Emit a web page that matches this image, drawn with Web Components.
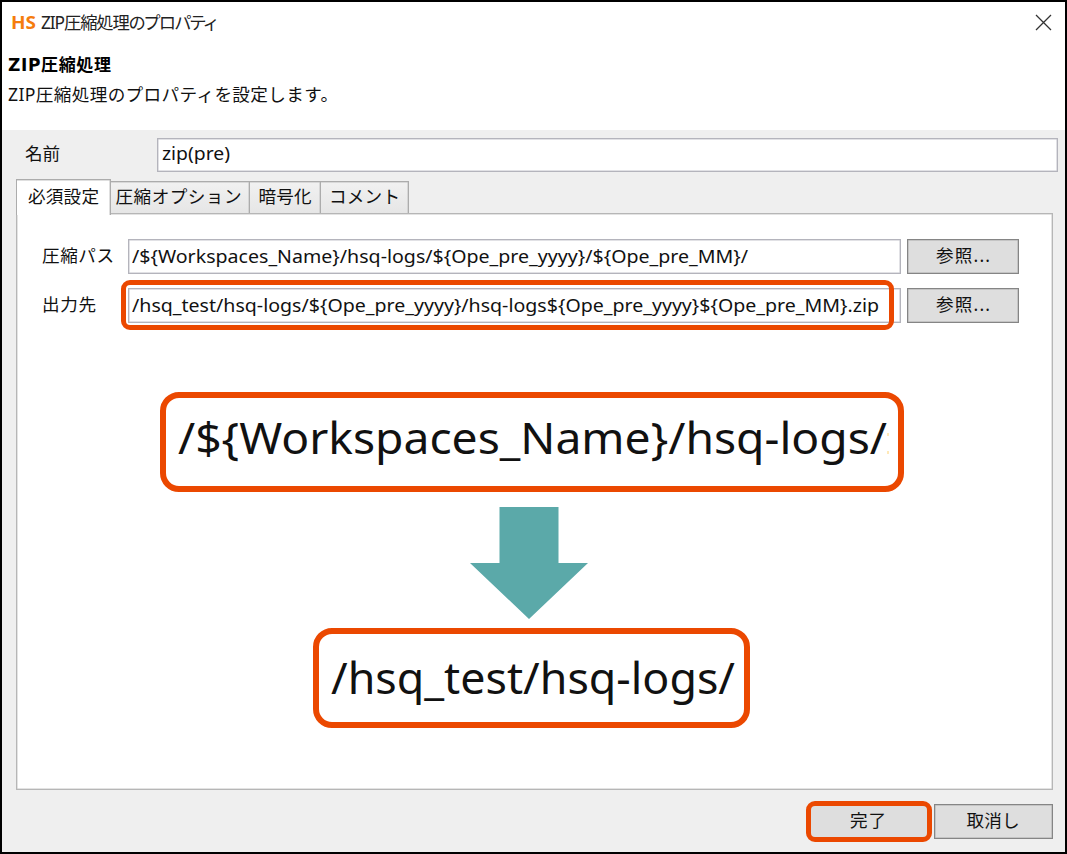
<!DOCTYPE html>
<html lang="ja">
<head>
<meta charset="utf-8">
<title>ZIP圧縮処理のプロパティ</title>
<style>
html,body{margin:0;padding:0}
body{width:1067px;height:854px;overflow:hidden;font-family:"Noto Sans","Noto Sans CJK JP",sans-serif;font-size:17.6px;color:#111}
</style>
</head>
<body>
<properties-dialog></properties-dialog>
<script>
const define = (name, html, setup) => {
  const template = document.createElement('template');
  template.innerHTML = html;
  customElements.define(name, class extends HTMLElement {
    connectedCallback() {
      if (this.shadowRoot) return;
      this.attachShadow({mode: 'open'}).append(template.content.cloneNode(true));
      if (setup) setup(this, this.shadowRoot);
    }
  });
};

/* One line of text that fills the width in its attribute: by tracking, or, with "stretch", by wider letters. */
define('fit-text', `
<style>
:host{display:block;white-space:nowrap;line-height:24px;flex:none}
span{display:inline-block;transform-origin:0 50%}
</style><span><slot></slot></span>`, (host, root) => {
  const span = root.querySelector('span');
  const width = parseFloat(host.getAttribute('width'));
  const count = [...host.textContent].length;
  host.style.width = width + 'px';
  const natural = span.getBoundingClientRect().width;
  if (host.hasAttribute('stretch')) {
    span.style.transform = `scaleX(${(width / natural).toFixed(4)})`;
  } else {
    span.style.letterSpacing = ((width - natural) / Math.max(1, count - 1)).toFixed(3) + 'px';
  }
});

define('text-field', `
<style>
:host{display:flex;align-items:center;box-sizing:border-box;height:35px;background:#fff;border:1px solid #b4b4bc;padding:0 0 2px 3px;box-shadow:inset 0 0 0 .5px #c4c4cc;font-size:17.8px}
</style><slot></slot>`);

define('push-button', `
<style>
:host{display:flex;align-items:center;justify-content:center;box-sizing:border-box;height:35px;background:#dedede;border:1px solid #858585;box-shadow:inset 0 0 0 .5px #aaa;padding-bottom:4px;flex:none}
</style><slot></slot>`);

define('tab-item', `
<style>
:host{display:flex;align-items:center;justify-content:center;box-sizing:border-box;height:32px;background:linear-gradient(#f1f1f1,#e6e6e6);border:solid #acacac;border-width:1px 1px 0 0;box-shadow:inset -.5px .5px 0 #c0c0c0;padding-bottom:3px}
:host([active]){height:36px;background:#fff;border-left-width:1px;margin-bottom:-2px;padding-bottom:3px;position:relative}
</style><slot></slot>`);

define('highlight-frame', `
<style>
:host{position:absolute;box-sizing:border-box;border:5px solid #eb4800;border-radius:9px;pointer-events:none}
</style>`);

define('callout-box', `
<style>
:host{display:flex;align-items:center;box-sizing:border-box;height:100px;border:6px solid #eb4800;border-radius:19px;background:#fff;font-size:43.4px;padding:0 0 1px 12px;flex:none;position:relative}
:host([clipped]){padding-bottom:9px}
:host([clipped])::after{content:"";position:absolute;left:721px;top:35px;width:2px;height:21px;background:linear-gradient(#ffe9b8 3px,#fff0 3px 18px,#ffe9b8 18px)}
</style><slot></slot>`);

define('down-arrow', `
<style>:host{display:block;width:118px;height:112px}svg{display:block}</style>
<svg width="118" height="112" viewBox="0 0 118 112"><path d="M29.5 0H88.5V56H118L59 112L0 56H29.5Z" fill="#5ba9a9"/></svg>`);

define('dialog-header', `
<style>
:host{display:block;height:128px;box-sizing:border-box;background:#fff;padding:8px 0 0 6px}
.title{display:flex;align-items:center;height:24px;padding-left:3px}
.hs{color:#f57c0d;font:700 17.5px/24px "Noto Sans",sans-serif}
.name{font-size:17.3px;font-feature-settings:"palt";margin:2px 0 0 5px;color:#222}
svg{margin-left:auto;margin-right:13px}
.bold{font-family:"DejaVu Sans","Noto Sans CJK JP",sans-serif;font-weight:700;font-size:17px;margin-top:19px;color:#000}
.desc{margin-top:5px}
</style>
<div class="title"><fit-text class="hs" stretch width="25">HS</fit-text><fit-text class="name" width="176">ZIP圧縮処理のプロパティ</fit-text>
<svg width="17" height="17" viewBox="0 0 17 17"><path d="M1 1L16 16M16 1L1 16" stroke="#333" stroke-width="1.3"/></svg></div>
<fit-text class="bold" width="103">ZIP圧縮処理</fit-text>
<fit-text class="desc" width="330">ZIP圧縮処理のプロパティを設定します。</fit-text>`);

define('required-panel', `
<style>
:host{display:block;box-sizing:border-box;height:577px;width:1037px;background:#fff;border:1px solid #b6b6b6;box-shadow:inset 0 0 0 .5px #c8c8c8;padding-top:25px}
.row{display:grid;grid-template-columns:86px 773px 112px;padding-left:25px;height:35px;align-items:center;margin-bottom:14px;position:relative}
.row push-button{margin-left:6px;width:112px}
.row>fit-text{margin-top:-4px}
highlight-frame{left:104px;top:-8px;width:773px;height:50px}
.callouts{display:flex;flex-direction:column;align-items:center;width:100%;margin-top:69px}
.one{width:744px;margin-left:-5px}
down-arrow{margin:15px 0 9px -11px}
.two{width:437px;margin-left:-6px}
</style>
<div class="row"><fit-text width="72">圧縮パス</fit-text><text-field><fit-text stretch width="616">/\${Workspaces_Name}/hsq-logs/\${Ope_pre_yyyy}/\${Ope_pre_MM}/</fit-text></text-field><push-button><fit-text width="54">参照...</fit-text></push-button></div>
<div class="row"><fit-text width="54">出力先</fit-text><text-field><fit-text stretch width="747">/hsq_test/hsq-logs/\${Ope_pre_yyyy}/hsq-logs\${Ope_pre_yyyy}\${Ope_pre_MM}.zip</fit-text></text-field><push-button><fit-text width="54">参照...</fit-text></push-button><highlight-frame></highlight-frame></div>
<div class="callouts">
<callout-box class="one" clipped><fit-text stretch width="709">/\${Workspaces_Name}/hsq-logs/</fit-text></callout-box>
<down-arrow></down-arrow>
<callout-box class="two"><fit-text stretch width="404">/hsq_test/hsq-logs/</fit-text></callout-box>
</div>`);

define('dialog-footer', `
<style>
:host{display:flex;justify-content:flex-end;padding:14px 12px 0 0;gap:5px}
.finish{position:relative;display:flex}
.finish push-button{width:120px;border-color:#2b8be0}
.cancel{width:119px}
highlight-frame{left:-3px;top:-3px;width:126px;height:41px}
</style>
<div class="finish"><push-button><fit-text width="36" style="margin-left:-2px">完了</fit-text></push-button><highlight-frame></highlight-frame></div>
<push-button class="cancel"><fit-text width="53" style="margin-left:-1px">取消し</fit-text></push-button>`);

define('properties-dialog', `
<style>
:host{display:block;box-sizing:border-box;width:1067px;height:854px;border:2px solid #000;background:#efefef}
.name{display:flex;align-items:center;padding:8px 0 0 23px;height:34px}
.name>fit-text{margin-top:-5px}
.name text-field{width:901px;height:34px;margin-left:97px;padding:0 0 5px 4px}
.tabs{display:flex;align-items:flex-end;height:35px;margin:6px 0 0 14px}
required-panel{margin-left:14px}
</style>
<dialog-header></dialog-header>
<div class="name"><fit-text width="35">名前</fit-text><text-field><fit-text stretch width="68">zip(pre)</fit-text></text-field></div>
<div class="tabs">
<tab-item active style="width:95px"><fit-text width="71">必須設定</fit-text></tab-item>
<tab-item style="width:139px"><fit-text width="126" style="margin-left:-3px">圧縮オプション</fit-text></tab-item>
<tab-item style="width:71px"><fit-text width="53">暗号化</fit-text></tab-item>
<tab-item style="width:88px"><fit-text width="71">コメント</fit-text></tab-item>
</div>
<required-panel></required-panel>
<dialog-footer></dialog-footer>`);
</script>
</body>
</html>
